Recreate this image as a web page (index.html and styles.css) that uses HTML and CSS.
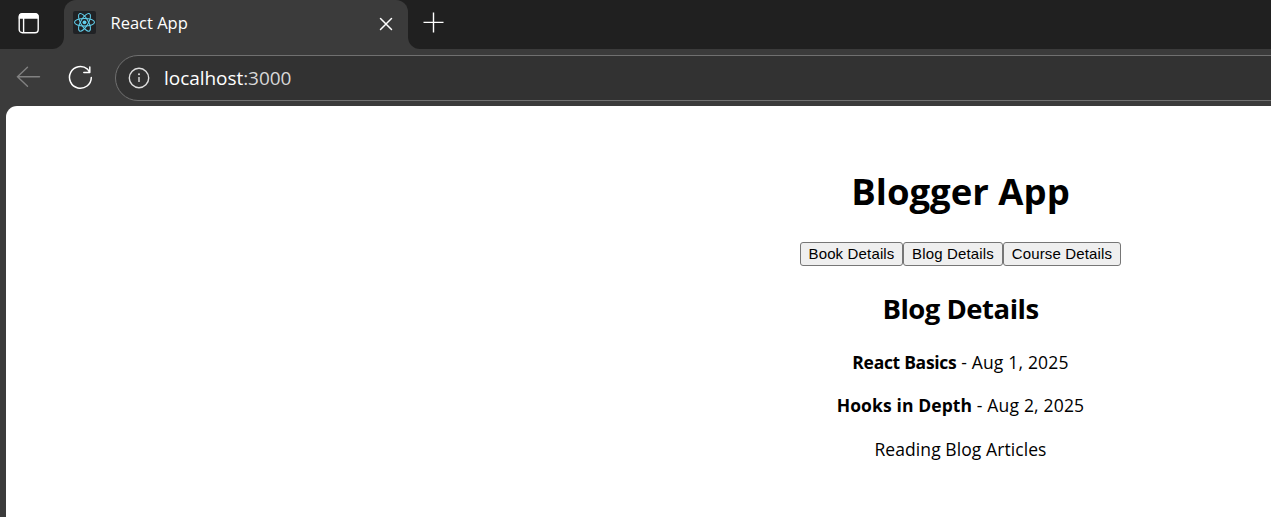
FILE: index.html
```html
<!DOCTYPE html>
<html lang="en">
<head>
<meta charset="utf-8">
<title>React App</title>
<link rel="stylesheet" href="styles.css">
</head>
<body>
<div class="browser">
  <header class="tabstrip">
    <div class="strip-start">
      <svg class="tab-actions" width="22" height="22" viewBox="0 0 22 22" fill="none" stroke="#fff" stroke-width="1.4"><rect x="1.2" y="1.7" width="19" height="19" rx="3.2"/><path d="M1.5 4.500a3 3 0 0 1 3-2.5h12.500a3 3 0 0 1 3 3v1h-18.500z" fill="#fff"/><path d="M5.600 6v14.500"/></svg>
    </div>
    <div class="tab">
      <svg class="favicon" width="23" height="23" viewBox="0 0 23 23" fill="none" stroke="#61cfec" stroke-width="1.050"><rect width="23" height="23" rx="2" fill="#202225" stroke="none"/><ellipse cx="11.500" cy="11.300" rx="10" ry="3.800"/><ellipse cx="11.500" cy="11.300" rx="10" ry="3.800" transform="rotate(60 11.500 11.300)"/><ellipse cx="11.500" cy="11.300" rx="10" ry="3.800" transform="rotate(120 11.500 11.300)"/><circle cx="11.500" cy="11.300" r="1.900" fill="#61cfec" stroke="none"/></svg>
      <span class="tab-title">React App</span>
      <svg class="close" width="14" height="14" viewBox="0 0 14 14" stroke="#fff" stroke-width="1.500" stroke-linecap="round"><path d="M1.500 1.500l11 11M12.500 1.500l-11 11"/></svg>
    </div>
    <div class="strip-end">
      <svg width="22" height="22" viewBox="0 0 22 22" stroke="#fff" stroke-width="1.400"><path d="M1.500 11.400h20M11.500 1.400v20"/></svg>
    </div>
  </header>
  <div class="toolbar">
    <svg class="back" width="26" height="22" viewBox="0 0 26 22" fill="none" stroke="#818181" stroke-width="1.400" stroke-linecap="round"><path d="M1.500 10.800H23.500M11.500 1.300L1.500 10.800l10 9.500"/></svg>
    <svg class="reload" width="26" height="26" viewBox="0 0 26 26" fill="none" stroke="#fff" stroke-width="1.500" stroke-linecap="round" stroke-linejoin="round"><path d="M24.300 13.500A10.900 10.900 0 1 1 20.500 5.100L22.800 8.400M22.800 3v5.400h-6"/></svg>
    <div class="address">
      <svg class="info" width="22" height="22" viewBox="0 0 22 22" fill="none" stroke="#dedede" stroke-width="1.400"><circle cx="11" cy="11" r="9.700"/><path d="M11 10v5"/><circle cx="11" cy="7.300" r="1" fill="#dedede" stroke="none"/></svg>
      <span class="url">localhost<span class="port">:3000</span></span>
    </div>
  </div>
  <main class="page">
    <div class="content">
      <h1>Blogger App</h1>
      <div class="buttons"><button class="book">Book Details</button><button class="blog">Blog Details</button><button class="course">Course Details</button></div>
      <h2>Blog Details</h2>
      <p class="first"><b>React Basics</b> - Aug 1, 2025</p>
      <p class="second"><b>Hooks in Depth</b> - Aug 2, 2025</p>
      <p class="third">Reading Blog Articles</p>
    </div>
  </main>
</div>
</body>
</html>
```
FILE: styles.css
```css
* { box-sizing: border-box; }
body { margin: 0; font-family: "Open Sans", "Noto Sans", sans-serif; }
svg { display: block; flex: none; }
.browser { height: 517px; overflow: hidden; background: #3b3b3b; display: flex; flex-direction: column; }
.tabstrip { height: 49px; flex: none; display: flex; background: #3b3b3b; }
.strip-start { width: 64px; background: #202020; border-bottom-right-radius: 12px; padding: 12px 0 0 18px; }
.tab { width: 344px; display: flex; padding: 11px 15px 0 9px; background: linear-gradient(#202020, #202020) 0 0 / 100% 14px no-repeat; position: relative; isolation: isolate; }
.tab::before { content: ""; position: absolute; inset: 0; background: #3b3b3b; border-radius: 12px 12px 0 0; z-index: -1; }
.tab-title { margin-left: 14.500px; color: #fff; font-size: 16.500px; line-height: 23px; white-space: nowrap; flex: 1; }
.close { margin-top: 6px; }
.strip-end { flex: 1; background: #202020; border-bottom-left-radius: 12px; padding: 11px 0 0 14px; }
.toolbar { height: 57px; flex: none; display: flex; padding-left: 16px; }
.back { margin-top: 17px; }
.reload { margin: 15px 0 0 25px; }
.address { margin: 6px -30px 5px 22px; flex: 1; border: 1.500px solid #707070; border-radius: 23px; background: #323232; display: flex; align-items: center; padding-left: 11.500px; }
.url { margin-left: 14.500px; color: #fff; font-size: 19px; letter-spacing: -0.050px; line-height: 28px; }
.port { color: #d8d8d8; }
.page { flex: 1; margin-left: 6px; background: #fff; border-top-left-radius: 11px; overflow: hidden; }
.content { width: 1909px; padding-top: 60px; display: flex; flex-direction: column; align-items: center; color: #000; }
h1 { margin: 0; font-size: 36.500px; line-height: 50px; white-space: nowrap; }
.buttons { margin-top: 26px; display: flex; }
button { height: 24px; border: 1px solid #767676; border-radius: 3px; background: #efefef; color: #000; font: 15px "Liberation Sans", Arial, sans-serif; letter-spacing: 0.150px; padding: 0 0 2px; white-space: nowrap; }
.book { width: 103px; }
.blog { width: 100px; }
.course { width: 118px; }
h2 { margin: 24px 0 0; font-size: 27.500px; letter-spacing: -0.500px; line-height: 38px; white-space: nowrap; }
p { margin: 0; font-size: 17.500px; letter-spacing: 0.180px; line-height: 24px; white-space: nowrap; }
.first { margin-top: 22px; }
.first b { letter-spacing: -0.300px; }
.second { margin-top: 19px; }
.second b { letter-spacing: 0.100px; }
.third { margin-top: 20px; letter-spacing: 0.080px; }
```
